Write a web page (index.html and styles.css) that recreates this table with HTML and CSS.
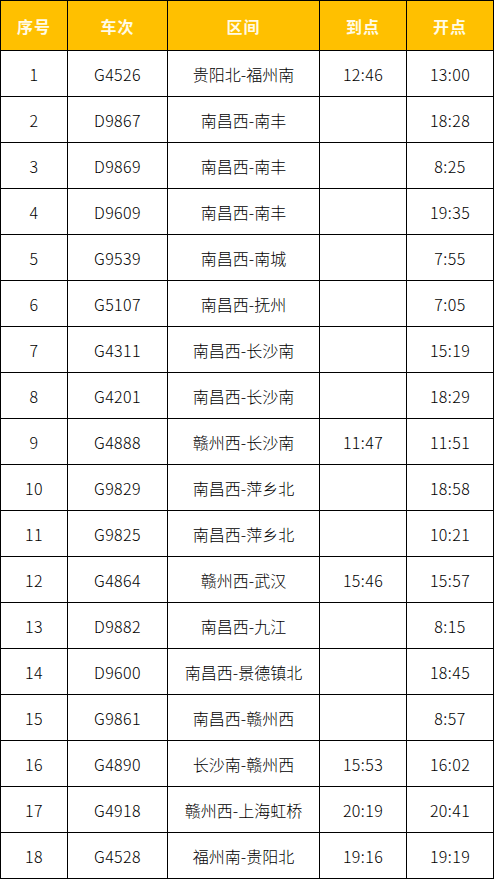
FILE: index.html
```html
<!DOCTYPE html>
<html lang="zh-CN">
<head>
<meta charset="utf-8">
<title>列车时刻表</title>
<link rel="stylesheet" href="styles.css">
</head>
<body>
<table class="schedule">
  <colgroup>
    <col class="c-no">
    <col class="c-train">
    <col class="c-route">
    <col class="c-arr">
    <col class="c-dep">
  </colgroup>
  <thead>
    <tr class="head-row"><th>序号</th><th>车次</th><th>区间</th><th>到点</th><th>开点</th></tr>
  </thead>
  <tbody>
    <tr><td class="num">1</td><td class="num">G4526</td><td>贵阳北-福州南</td><td class="num">12:46</td><td class="num">13:00</td></tr>
    <tr><td class="num">2</td><td class="num">D9867</td><td>南昌西-南丰</td><td class="num"></td><td class="num">18:28</td></tr>
    <tr><td class="num">3</td><td class="num">D9869</td><td>南昌西-南丰</td><td class="num"></td><td class="num">8:25</td></tr>
    <tr><td class="num">4</td><td class="num">D9609</td><td>南昌西-南丰</td><td class="num"></td><td class="num">19:35</td></tr>
    <tr><td class="num">5</td><td class="num">G9539</td><td>南昌西-南城</td><td class="num"></td><td class="num">7:55</td></tr>
    <tr><td class="num">6</td><td class="num">G5107</td><td>南昌西-抚州</td><td class="num"></td><td class="num">7:05</td></tr>
    <tr><td class="num">7</td><td class="num">G4311</td><td>南昌西-长沙南</td><td class="num"></td><td class="num">15:19</td></tr>
    <tr><td class="num">8</td><td class="num">G4201</td><td>南昌西-长沙南</td><td class="num"></td><td class="num">18:29</td></tr>
    <tr><td class="num">9</td><td class="num">G4888</td><td>赣州西-长沙南</td><td class="num">11:47</td><td class="num">11:51</td></tr>
    <tr><td class="num">10</td><td class="num">G9829</td><td>南昌西-萍乡北</td><td class="num"></td><td class="num">18:58</td></tr>
    <tr><td class="num">11</td><td class="num">G9825</td><td>南昌西-萍乡北</td><td class="num"></td><td class="num">10:21</td></tr>
    <tr><td class="num">12</td><td class="num">G4864</td><td>赣州西-武汉</td><td class="num">15:46</td><td class="num">15:57</td></tr>
    <tr><td class="num">13</td><td class="num">D9882</td><td>南昌西-九江</td><td class="num"></td><td class="num">8:15</td></tr>
    <tr><td class="num">14</td><td class="num">D9600</td><td>南昌西-景德镇北</td><td class="num"></td><td class="num">18:45</td></tr>
    <tr><td class="num">15</td><td class="num">G9861</td><td>南昌西-赣州西</td><td class="num"></td><td class="num">8:57</td></tr>
    <tr><td class="num">16</td><td class="num">G4890</td><td>长沙南-赣州西</td><td class="num">15:53</td><td class="num">16:02</td></tr>
    <tr><td class="num">17</td><td class="num">G4918</td><td>赣州西-上海虹桥</td><td class="num">20:19</td><td class="num">20:41</td></tr>
    <tr><td class="num">18</td><td class="num">G4528</td><td>福州南-贵阳北</td><td class="num">19:16</td><td class="num">19:19</td></tr>
  </tbody>
</table>
</body>
</html>
```

FILE: styles.css
```css
html, body {
  margin: 0;
  padding: 0;
  background: #ffffff;
}

.schedule {
  border-collapse: collapse;
  table-layout: fixed;
  width: 493px;
  font-family: "Noto Sans CJK SC", "Noto Sans", sans-serif;
  font-size: 16px;
  color: #000000;
}

.c-no { width: 67px; }
.c-train { width: 100px; }
.c-route { width: 152px; }
.c-arr { width: 87px; }
.c-dep { width: 87px; }

.schedule th,
.schedule td {
  border: 1px solid #000000;
  padding: 0;
  text-align: center;
  vertical-align: middle;
  line-height: 20px;
  white-space: nowrap;
}

.head-row {
  height: 50px;
}

.schedule th {
  background: #ffc000;
  color: #fffbe6;
  font-weight: 700;
  font-size: 16px;
  letter-spacing: 1px;
}

.schedule tbody tr {
  height: 46px;
}

.schedule td {
  font-weight: 300;
}

.schedule td.num {
  font-family: "Noto Sans CJK SC", "Noto Sans", sans-serif;
  font-size: 16px;
  font-weight: 300;
  font-variant-numeric: tabular-nums;
  letter-spacing: 0.4px;
}
```
